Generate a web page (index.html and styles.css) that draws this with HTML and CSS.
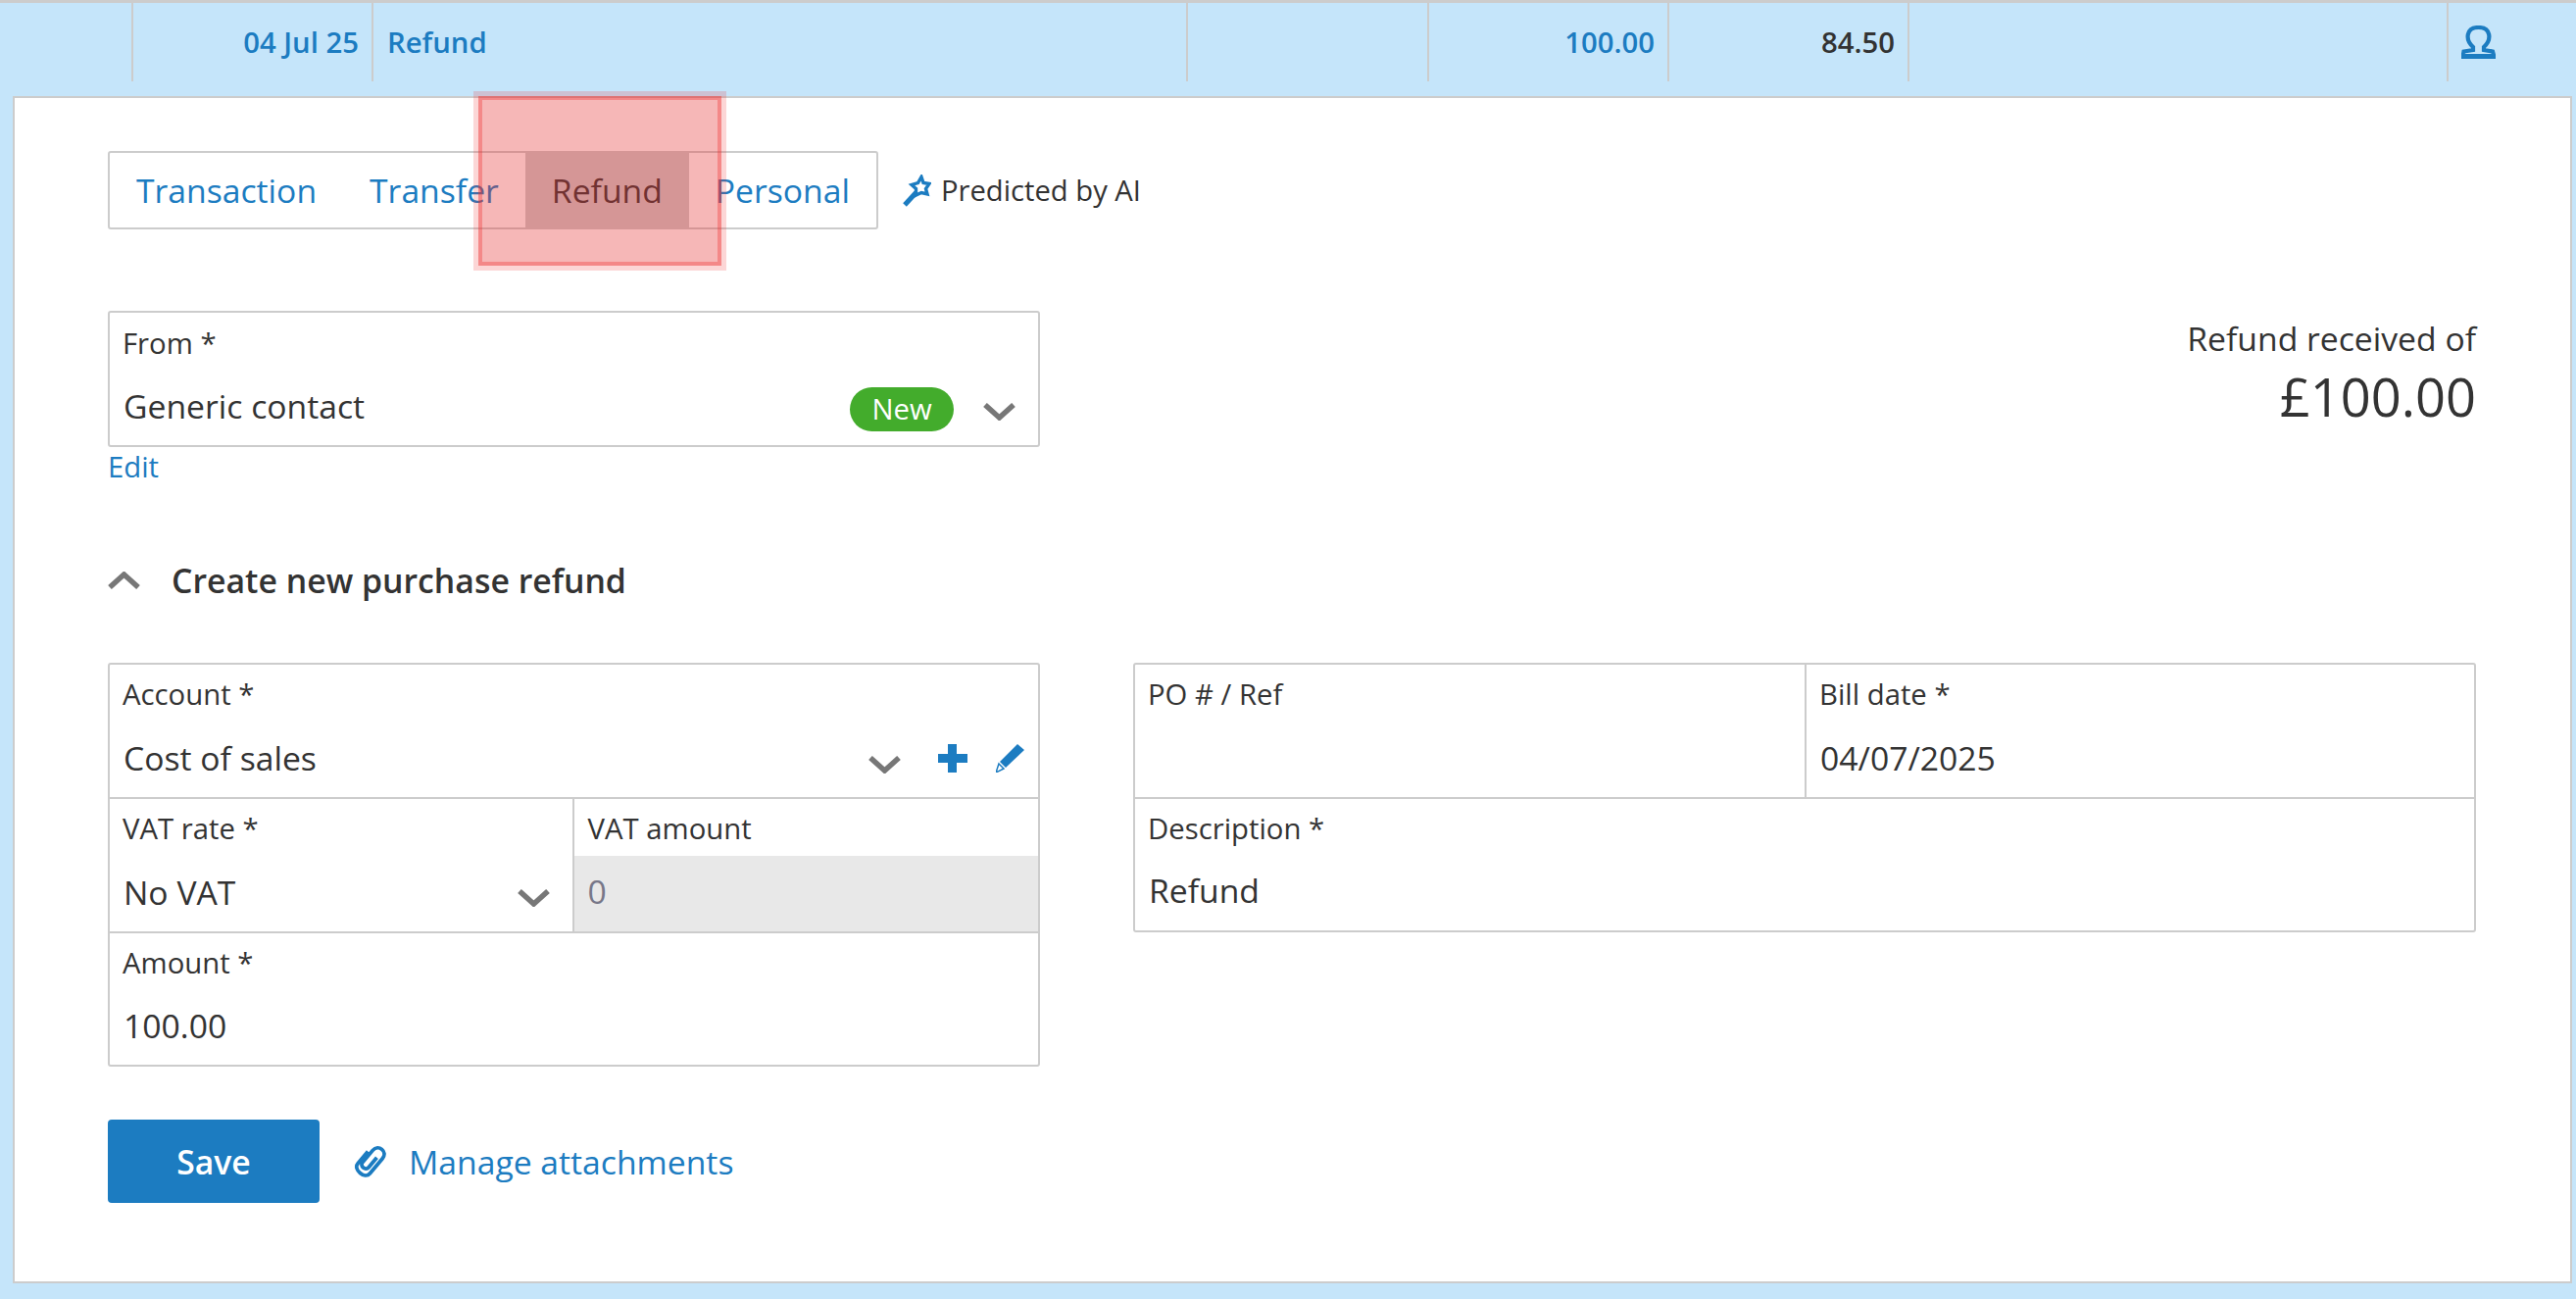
FILE: index.html
```html
<!DOCTYPE html>
<html lang="en">
<head>
<meta charset="utf-8">
<title>Refund</title>
<link rel="stylesheet" href="styles.css">
</head>
<body>
<div class="row">
  <div class="cell c1"></div>
  <div class="cell c2 right link">04 Jul 25</div>
  <div class="cell c3 link">Refund</div>
  <div class="cell c4"></div>
  <div class="cell c5 right link">100.00</div>
  <div class="cell c6 right">84.50</div>
  <div class="cell c7"></div>
  <div class="cell c8">
    <svg class="person" viewBox="0 0 35 34"><path d="M12 22C3.500 14 5 2 17.500 2S31.500 14 23 22V25L32 26.500L33.500 32H1.500L2.500 26.500L12 25Z" fill="none" stroke="#1c7cc1" stroke-width="4.200" stroke-linejoin="miter"/><path d="M1.500 29H33.500L34 34H1Z" fill="#1c7cc1"/></svg>
  </div>
</div>
<main class="panel">
  <div class="type-row">
    <div class="tabs">
      <span class="tab">Transaction</span>
      <span class="tab">Transfer</span>
      <span class="tab active">Refund</span>
      <span class="tab">Personal</span>
    </div>
    <svg class="wand" viewBox="0 0 29 33"><path d="M19 2.500L21 8.500L27 9.500L23.500 14.500L25 20L19 18.500L13.500 21L13.500 14.500L9 10.500L15.500 8.500Z" fill="none" stroke="#1c7cc1" stroke-width="3.400"/><path d="M13.500 18.500L2 31" stroke="#1c7cc1" stroke-width="5" fill="none"/></svg>
    <span class="predicted">Predicted by AI</span>
  </div>
  <div class="from-row">
    <div class="from-col">
      <div class="box">
        <div class="label from-label">From *</div>
        <div class="value from-value">
          <span>Generic contact</span>
          <span class="pill">New</span>
          <svg class="chev chev-from" viewBox="0 0 33 18"><path d="M2 2L16.500 15L31 2" fill="none" stroke="#777" stroke-width="5.500"/></svg>
        </div>
      </div>
      <a class="edit">Edit</a>
    </div>
    <div class="total">
      <div class="total-label">Refund received of</div>
      <div class="total-amount">£100.00</div>
    </div>
  </div>
  <div class="section-title">
    <svg class="chev" viewBox="0 0 33 18"><path d="M2 16L16.500 3L31 16" fill="none" stroke="#777" stroke-width="5.500"/></svg>
    <span>Create new purchase refund</span>
  </div>
  <div class="forms">
    <div class="box grid">
      <div class="field wide line">
        <div class="label">Account *</div>
        <div class="value">
          <span>Cost of sales</span>
          <svg class="chev chev-account" viewBox="0 0 33 18"><path d="M2 2L16.500 15L31 2" fill="none" stroke="#777" stroke-width="5.500"/></svg>
          <svg class="plus" viewBox="0 0 30 29"><path d="M10 0H19V10H30V19H19V29H10V19H0V10H10Z" fill="#1c7cc1"/></svg>
          <svg class="pen" viewBox="0 0 29 29"><path d="M22 0L29 6L10 24L4 18Z" fill="#1c7cc1"/><path d="M3 20L8 25L0 29Z" fill="none" stroke="#1c7cc1" stroke-width="1.500"/></svg>
        </div>
      </div>
      <div class="field line vline">
        <div class="label">VAT rate *</div>
        <div class="value">
          <span>No VAT</span>
          <svg class="chev chev-from" viewBox="0 0 33 18"><path d="M2 2L16.500 15L31 2" fill="none" stroke="#777" stroke-width="5.500"/></svg>
        </div>
      </div>
      <div class="field line">
        <div class="label label-vat">VAT amount</div>
        <div class="value disabled">0</div>
      </div>
      <div class="field wide">
        <div class="label">Amount *</div>
        <div class="value">100.00</div>
      </div>
    </div>
    <div class="box grid grid-right">
      <div class="field line vline">
        <div class="label">PO # / Ref</div>
        <div class="value"></div>
      </div>
      <div class="field line">
        <div class="label">Bill date *</div>
        <div class="value">04/07/2025</div>
      </div>
      <div class="field wide">
        <div class="label">Description *</div>
        <div class="value">Refund</div>
      </div>
    </div>
  </div>
  <div class="actions">
    <button class="save">Save</button>
    <svg class="clip" viewBox="0 0 34 34"><g transform="rotate(40 17 17)" fill="none" stroke="#1c7cc1" stroke-width="3.800"><path d="M9 10V26C9 34 25 34 25 26V6C25 -3 12 -3 12 6V22C12 27 20 27 20 22V9"/></g></svg>
    <a class="manage">Manage attachments</a>
  </div>
</main>
<div class="highlight"></div>
</body>
</html>
```
FILE: styles.css
```css
* { box-sizing: border-box; }
html, body { margin: 0; padding: 0; }
body {
  position: relative;
  width: 2628px;
  height: 1325px;
  overflow: hidden;
  background: #c5e5fa;
  font-family: "Open Sans", "Noto Sans", sans-serif;
  color: #333;
}
.row {
  display: grid;
  grid-template-columns: 136px 245px 831px 246px 245px 245px 550px 1fr;
  height: 98px;
  border-top: 3px solid #ccc;
  padding-bottom: 15px;
  font-size: 29.300px;
  font-weight: 600;
}
.cell {
  display: flex;
  align-items: center;
  padding: 0 13px;
  border-right: 2px solid #ccc;
  height: 80px;
}
.c3 { padding-left: 14px; }
.c8 { border-right: 0; padding: 0 0 0 13px; }
.right { justify-content: flex-end; }
.link { color: #1c7cc1; }
.person { width: 35px; height: 34px; }
.panel {
  margin: 0 4px 0 13px;
  height: 1211px;
  padding: 54px 96px 0 95px;
  background: #fff;
  border: 2px solid #ccc;
}
.type-row { display: flex; align-items: center; }
.tabs {
  display: flex;
  align-items: center;
  height: 80px;
  border: 2px solid #ccc;
  border-radius: 3px;
  font-size: 33.700px;
  color: #1c7cc1;
}
.tab {
  display: flex;
  align-items: center;
  padding: 0 27px;
  height: 80px;
}
.tab.active { background: #ccc; color: #333; }
.wand { width: 29px; height: 33px; margin-left: 25px; }
.predicted { margin-left: 10px; font-size: 29.200px; }
.from-row {
  display: flex;
  justify-content: space-between;
  margin-top: 83px;
}
.from-col { width: 951px; }
.box { border: 2px solid #ccc; border-radius: 3px; }
.label {
  height: 58px;
  padding: 10px 13px 0;
  font-size: 29.300px;
  line-height: 40px;
}
.label-vat { padding-left: 14px; }
.value {
  display: flex;
  align-items: center;
  height: 77px;
  padding: 0 14px 4px;
  font-size: 33.700px;
  line-height: 46px;
}
.from-label { height: 58px; padding-top: 11px; }
.from-value { height: 77px; padding: 0 23px 3px 14px; }
.pill {
  margin-left: auto;
  margin-top: 6px;
  width: 106px;
  height: 45px;
  border-radius: 23px;
  background: #43ac2c;
  color: #fff;
  font-size: 29.300px;
  line-height: 45px;
  text-align: center;
}
.chev { width: 33px; height: 18px; flex: none; }
.chev-from { margin-left: auto; margin-top: 12px; margin-right: 9px; }
.pill + .chev-from { margin-left: 30px; margin-right: 0; }
.chev-account { margin-left: auto; margin-top: 14px; }
.plus { width: 30px; height: 29px; margin-left: 38px; margin-top: 2px; }
.pen { width: 29px; height: 29px; margin-left: 29px; margin-top: 2px; }
.edit {
  display: block;
  margin-top: 0;
  font-size: 29.300px;
  line-height: 40px;
  color: #1c7cc1;
}
.total { text-align: right; }
.total-label { font-size: 33.700px; line-height: 46px; margin-top: 5px; }
.total-amount { font-size: 54.200px; line-height: 74px; margin-top: -1px; }
.section-title {
  display: flex;
  align-items: center;
  gap: 32px;
  margin-top: 66px;
  height: 60px;
  font-size: 33.800px;
  font-weight: 600;
}
.forms {
  display: grid;
  grid-template-columns: 951px 1370px;
  gap: 95px;
  margin-top: 54px;
  align-items: start;
}
.grid { display: grid; grid-template-columns: 1fr 1fr; }
.grid-right { grid-template-columns: 685px 1fr; }
.field { display: flex; flex-direction: column; height: 134px; }
.wide { grid-column: 1 / 3; }
.line { border-bottom: 2px solid #ccc; height: 137px; }
.vline { border-right: 2px solid #ccc; }
.grid-right .wide .value { padding-bottom: 6px; }
.disabled { background: #e8e8e8; color: #778; padding-bottom: 6px; }
.actions {
  display: flex;
  align-items: center;
  margin-top: 54px;
}
.save {
  width: 216px;
  height: 85px;
  border: 0;
  border-radius: 4px;
  background: #1c7cc1;
  color: #fff;
  font: 600 33.700px "Open Sans", sans-serif;
}
.clip { width: 34px; height: 34px; margin-left: 34px; }
.manage { margin-left: 23px; font-size: 33.700px; color: #1c7cc1; }
.highlight {
  position: absolute;
  left: 488px;
  top: 98px;
  width: 248px;
  height: 173px;
  background: rgba(230, 50, 50, 0.35);
  border: 4px solid rgba(240, 50, 50, 0.35);
  box-shadow: 0 0 0 5px rgba(240, 50, 50, 0.2);
}
```
